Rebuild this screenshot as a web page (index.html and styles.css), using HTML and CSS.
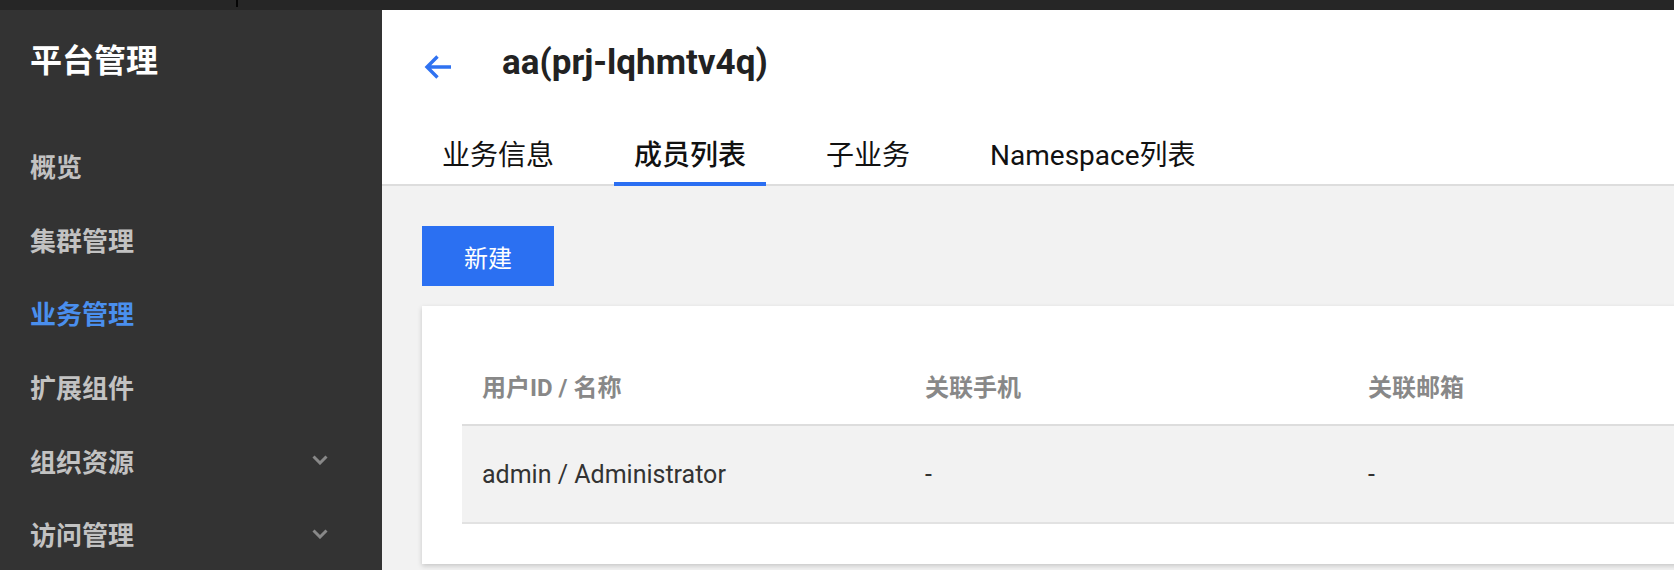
FILE: index.html
```html
<!DOCTYPE html>
<html lang="zh-CN">
<head>
<meta charset="utf-8">
<title>平台管理</title>
<link rel="stylesheet" href="styles.css">
</head>
<body>
<div class="topbar"><span class="topbar-mark"></span></div>
<div class="app">
  <aside class="sidebar">
    <div class="brand">平台管理</div>
    <nav class="menu">
      <div class="menu-item">概览</div>
      <div class="menu-item">集群管理</div>
      <div class="menu-item active">业务管理</div>
      <div class="menu-item">扩展组件</div>
      <div class="menu-item">组织资源
        <svg class="chevron" width="16" height="10" viewBox="0 0 16 10"><path d="M1.5 1.5 L8 8 L14.5 1.5" fill="none" stroke="#888" stroke-width="3"/></svg>
      </div>
      <div class="menu-item">访问管理
        <svg class="chevron" width="16" height="10" viewBox="0 0 16 10"><path d="M1.5 1.5 L8 8 L14.5 1.5" fill="none" stroke="#888" stroke-width="3"/></svg>
      </div>
    </nav>
  </aside>
  <main class="main">
    <header class="page-header">
      <div class="title-row">
        <svg class="back" width="28" height="28" viewBox="0 0 28 28"><path d="M27 14 H3 M13.5 3.5 L3 14 L13.5 24.5" fill="none" stroke="#2f72f1" stroke-width="3.4"/></svg>
        <h1 class="page-title">aa(prj-lqhmtv4q)</h1>
      </div>
      <div class="tabs">
        <div class="tab">业务信息</div>
        <div class="tab active">成员列表</div>
        <div class="tab">子业务</div>
        <div class="tab">Namespace列表</div>
      </div>
    </header>
    <section class="content">
      <button class="btn-primary">新建</button>
      <div class="card">
        <div class="table">
          <div class="row head">
            <div class="cell">用户ID / 名称</div>
            <div class="cell">关联手机</div>
            <div class="cell">关联邮箱</div>
            <div class="cell"></div>
          </div>
          <div class="row body-row">
            <div class="cell">admin / Administrator</div>
            <div class="cell">-</div>
            <div class="cell">-</div>
            <div class="cell"></div>
          </div>
        </div>
      </div>
    </section>
  </main>
</div>
</body>
</html>
```

FILE: styles.css
```css
* { box-sizing: border-box; }
html, body {
  margin: 0;
  padding: 0;
  width: 1674px;
  height: 570px;
  overflow: hidden;
  font-family: Roboto, "Noto Sans CJK SC", sans-serif;
}
.topbar {
  height: 10px;
  background: #262626;
  display: flex;
}
.topbar-mark {
  margin-left: 236px;
  width: 2px;
  height: 7px;
  background: #050505;
}
.app {
  display: flex;
  height: 560px;
}
.sidebar {
  width: 382px;
  flex: none;
  background: #333333;
}
.brand {
  height: 119px;
  padding: 31px 0 0 30px;
  font-size: 32px;
  line-height: 40px;
  font-weight: 700;
  color: #ffffff;
}
.menu-item {
  height: 73.6px;
  display: flex;
  align-items: center;
  justify-content: space-between;
  padding: 0 54px 0 30px;
  font-size: 26px;
  font-weight: 700;
  color: #c2c2c2;
}
.menu-item.active { color: #4a8fee; }
.chevron { display: block; }
.main {
  flex: 1;
  min-width: 0;
  display: flex;
  flex-direction: column;
  overflow: hidden;
}
.page-header {
  background: #ffffff;
  border-bottom: 2px solid #dddddd;
}
.title-row {
  display: flex;
  align-items: center;
  height: 54px;
  margin-top: 30px;
  margin-bottom: 42px;
  padding-left: 42px;
}
.back { display: block; flex: none; }
.page-title {
  margin: 0 0 0 50px;
  padding-bottom: 8px;
  font-size: 35px;
  line-height: 54px;
  font-weight: 700;
  color: #222222;
}
.tabs {
  display: flex;
  gap: 40px;
  padding-left: 40px;
  margin-bottom: -2px;
}
.tab {
  padding: 0 20px 6px;
  font-size: 28px;
  line-height: 40px;
  color: #111111;
  border-bottom: 4px solid transparent;
}
.tab.active {
  font-weight: 500;
  border-bottom-color: #2b6ff2;
}
.content {
  flex: 1;
  background: #f2f2f2;
  padding: 40px 0 0 40px;
}
.btn-primary {
  display: block;
  width: 132px;
  height: 60px;
  border: none;
  padding: 0;
  background: #2b70f2;
  color: #ffffff;
  font-family: Roboto, "Noto Sans CJK SC", sans-serif;
  font-size: 24px;
}
.card {
  margin-top: 20px;
  width: 1500px;
  height: 258px;
  background: #ffffff;
  box-shadow: 0 2px 5px rgba(0, 0, 0, 0.18);
  padding: 40px 40px 40px;
}
.row {
  display: grid;
  grid-template-columns: 443px 443px 443px 1fr;
  align-items: center;
}
.row.head {
  height: 80px;
  border-bottom: 2px solid #dddddd;
  font-size: 24px;
  font-weight: 700;
  color: #888888;
}
.row.body-row {
  height: 98px;
  background: #f2f2f2;
  border-bottom: 2px solid #e2e2e2;
  font-size: 25px;
  color: #333333;
}
.cell { padding-left: 20px; }
```
